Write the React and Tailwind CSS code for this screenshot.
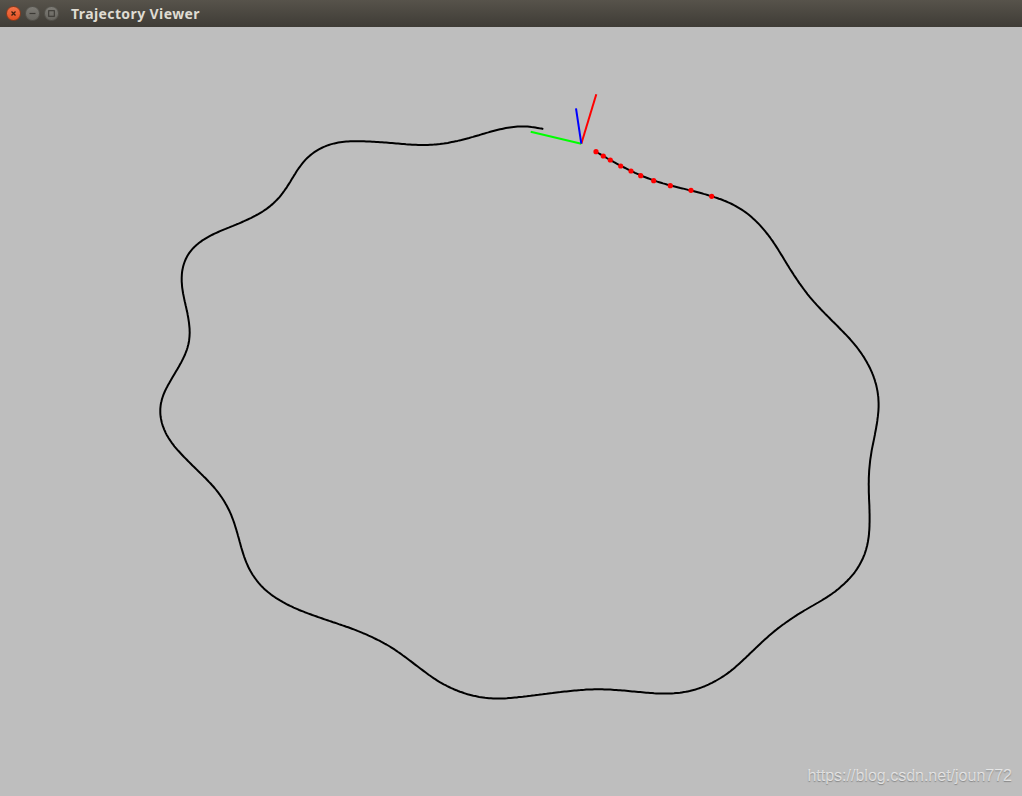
const trajectory = [
  [543.3,129],[530,126.6],[515,125.7],[493.3,130.7],[466.7,139],[440,144.7],[416.7,145.3],[380,142],[350,140.7],[330,143.3],[310,153.3],[296.7,170],[285,191.7],[268.3,209.3],[240,223.3],[210,235],[190.5,248.3],[181.2,266.7],[181.6,290],[188.8,316.7],[190.8,343.3],[178.3,368.3],[163.5,391.7],[158,411.7],[166.8,438.3],[190,463.3],[216,488.3],[231,511.7],[238.8,538.3],[246.7,566.7],[263.3,590],[290,606.7],[323.3,619],[356.7,630],[390,645.7],[416.7,665.7],[440,683.3],[468,695.3],[497,699.6],[528,696],[560,692],[596,688.6],[623.3,690.5],[666.7,694.5],[696.7,690.5],[726.7,675.3],[746.7,656.7],[773.3,631.3],[800,612.7],[833.3,594],[856.7,572],[868.3,546.8],[870,518],[868.3,484],[870,457],[876.7,427],[879.8,399.7],[873.3,372.7],[856.7,345.6],[833.3,322],[810,298.3],[790,269.6],[773.3,240.9],[753.3,217.2],[733.3,203.7],[711.7,196],[691,190.4],[670.3,185.7],[653.7,180.7],[640.7,175.7],[631,171],[620.7,166],[610.3,160],[603.3,156],[596,151.7],
];

const dots = [[596,151.7],[603.3,156],[610.3,160],[620.7,166],[631,171],[640.7,175.7],[653.7,180.7],[670.3,185.7],[691,190.3],[711.7,196.3]];

// The trace is a smooth curve: resample the measured points every 2px and low-pass them.
function resample(p, step) {
  const out = [p[0]];
  let carry = 0;
  for (let i = 0; i < p.length - 1; i++) {
    const [ax, ay] = p[i], [bx, by] = p[i + 1];
    const len = Math.hypot(bx - ax, by - ay);
    let t = step - carry;
    while (t <= len) {
      out.push([ax + ((bx - ax) * t) / len, ay + ((by - ay) * t) / len]);
      t += step;
    }
    carry = len - (t - step);
  }
  out.push(p[p.length - 1]);
  return out;
}

function gaussian(p, sigma) {
  const radius = Math.ceil(sigma * 3);
  return p.map((pt, i) => {
    // Shrink the window near the open ends so that they stay in place.
    const r = Math.min(radius, i, p.length - 1 - i);
    let sx = 0, sy = 0, sw = 0;
    for (let k = -r; k <= r; k++) {
      const w = Math.exp(-(k * k) / (2 * sigma * sigma));
      sx += p[i + k][0] * w; sy += p[i + k][1] * w; sw += w;
    }
    return [sx / sw, sy / sw];
  });
}

function smoothTrace(p) {
  const base = resample(p, 2);
  const once = gaussian(base, 7);
  const low = gaussian(once, 7);
  // Add back what the filter took off the wave crests.
  const kept = once.map((q, i) => [q[0] + (q[0] - low[i][0]) * 0.6, q[1] + (q[1] - low[i][1]) * 0.6]);
  return "M" + kept.map((q) => `${q[0].toFixed(1)} ${q[1].toFixed(1)}`).join("L");
}

function WindowButton({ className, children }) {
  return (
    <div className={`flex h-[15px] w-[15px] items-center justify-center rounded-full border ${className}`}>
      <svg width="9" height="9" viewBox="0 0 9 9" fill="none">{children}</svg>
    </div>
  );
}

export default function App() {
  return (
    <div className="relative flex h-[796px] w-[1022px] flex-col overflow-hidden bg-[#bebebe] font-['Noto_Sans','Liberation_Sans',sans-serif]">
      <header className="flex h-[27px] shrink-0 items-center bg-gradient-to-b from-[#57534b] to-[#3f3c36] pl-[6px]">
        <div className="flex items-center gap-[4px]">
          <WindowButton className="border-[#8a3a1c] bg-gradient-to-b from-[#f4744a] to-[#e4501f]">
            <path d="M2.5 2.5l4 4M6.5 2.5l-4 4" stroke="#41200f" strokeWidth="1.3" />
          </WindowButton>
          <WindowButton className="border-[#55534d] bg-gradient-to-b from-[#7d7b75] to-[#67655f]">
            <path d="M1.5 4.5h6" stroke="#3c3a35" strokeWidth="1.2" />
          </WindowButton>
          <WindowButton className="border-[#55534d] bg-gradient-to-b from-[#7d7b75] to-[#67655f]">
            <rect x="1.7" y="1.7" width="5.6" height="5.6" stroke="#3c3a35" strokeWidth="1.1" />
          </WindowButton>
        </div>
        <span className="ml-[12px] text-[14px] font-bold tracking-[0.4px] text-[#dfdbd2]">Trajectory Viewer</span>
      </header>

      <main className="relative flex-1">
        <svg width="1022" height="769" viewBox="0 27 1022 769" fill="none" className="block">
          <path d={smoothTrace(trajectory)} stroke="#000" strokeWidth="2" strokeLinejoin="round" />
          {dots.map(([x, y]) => (
            <circle key={x} cx={x} cy={y} r="2.6" fill="#f00" />
          ))}
          <path d="M581.3 143.7L596.3 94.3" stroke="#f00" strokeWidth="2" />
          <path d="M581.3 143.7L530.7 131.7" stroke="#0f0" strokeWidth="2" />
          <path d="M581.3 143.7L576 108.3" stroke="#00f" strokeWidth="2" />
        </svg>
        <span className="absolute bottom-[10px] right-[10px] font-['Liberation_Sans',sans-serif] text-[16px] leading-5 text-white/65 [text-shadow:0_1px_1px_rgba(90,90,90,0.55)]">
          https://blog.csdn.net/joun772
        </span>
      </main>

      <div className="flex h-px shrink-0">
        <div className="w-[65px] bg-gradient-to-r from-[#5f6b5c] to-[#3a3a3a]" />
        <div className="flex-1 bg-[#66705f]" />
        <div className="w-[70px] bg-black" />
      </div>
    </div>
  );
}
